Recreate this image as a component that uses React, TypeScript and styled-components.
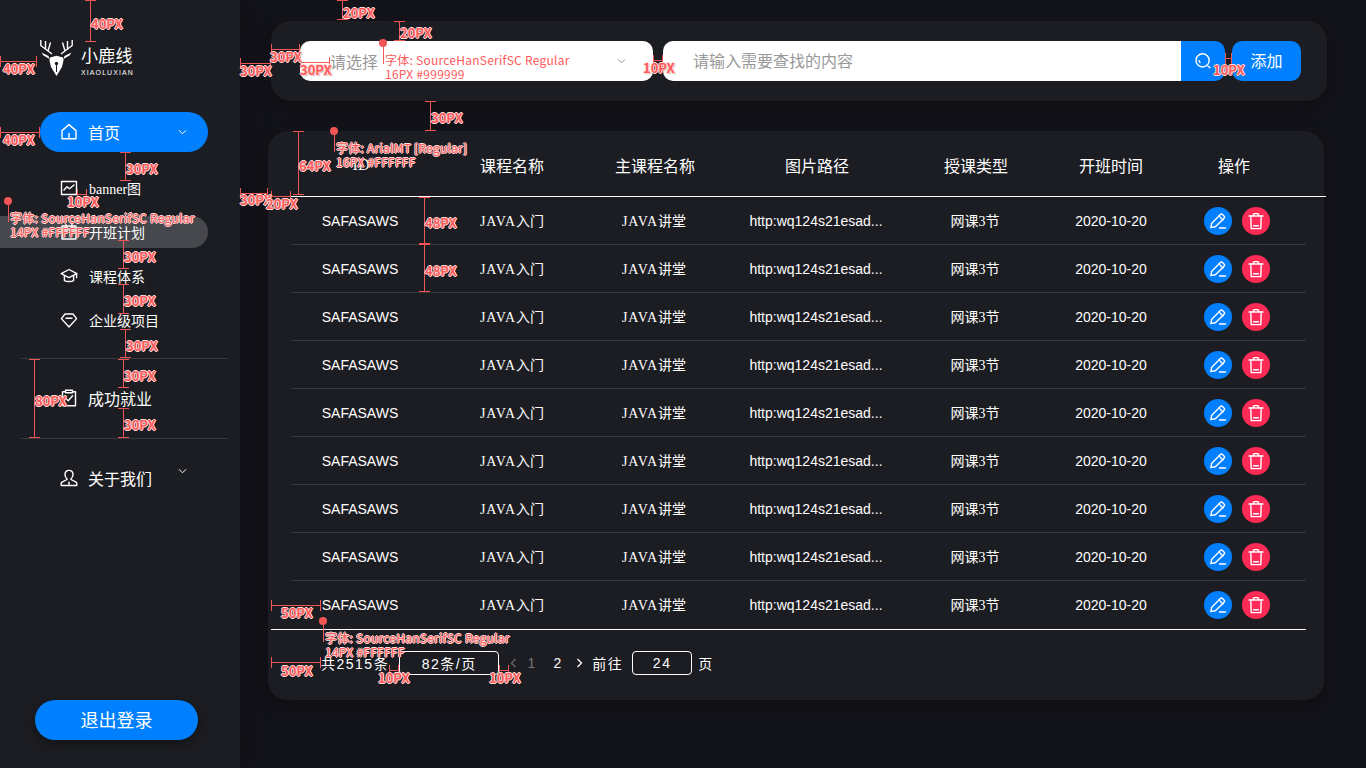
import styled, { createGlobalStyle } from "styled-components";
import { ReactNode } from "react";

const SERIF = `"Liberation Serif", "Noto Sans CJK SC", serif`;
const ARIAL = `"Liberation Sans", "Noto Sans CJK SC", sans-serif`;
const BLUE = "#007fff";

const rows = Array.from({ length: 9 }, (_, i) => i);

export default function App() {
  return (
    <Page>
      <GlobalStyle />
      <Sidebar>
        <Logo>
          <DeerLogo />
          <LogoText>
            <LogoName>小鹿线</LogoName>
            <LogoSub>XIAOLUXIAN</LogoSub>
          </LogoText>
        </Logo>
        <HomeItem>
          <IconHome />
          <ItemLabel $size={16}>首页</ItemLabel>
          <Chevron $color="#fff" />
        </HomeItem>
        <SubNav>
          <SubItem>
            <IconChart />
            <ItemLabel>banner图</ItemLabel>
          </SubItem>
          <SubItem $active>
            <IconCalendar />
            <ItemLabel>开班计划</ItemLabel>
          </SubItem>
          <SubItem>
            <IconCap />
            <ItemLabel>课程体系</ItemLabel>
          </SubItem>
          <SubItem>
            <IconDiamond />
            <ItemLabel>企业级项目</ItemLabel>
          </SubItem>
        </SubNav>
        <Section>
          <IconClipboard />
          <ItemLabel $size={16}>成功就业</ItemLabel>
        </Section>
        <AboutItem>
          <IconUser />
          <ItemLabel $size={16}>关于我们</ItemLabel>
          <AboutChevron>
            <Chevron $color="#fff" />
          </AboutChevron>
        </AboutItem>
        <Logout>退出登录</Logout>
      </Sidebar>

      <Main>
        <SearchPanel>
          <SelectBox>
            <span>请选择</span>
            <Chevron $color="#999" />
          </SelectBox>
          <SearchInput>请输入需要查找的内容</SearchInput>
          <SearchButton>
            <IconSearch />
          </SearchButton>
          <AddButton>添加</AddButton>
        </SearchPanel>

        <TableCard>
          <HeadRow>
            <HeadCell>ID</HeadCell>
            <HeadCell $shift={2}>课程名称</HeadCell>
            <HeadCell>主课程名称</HeadCell>
            <HeadCell>图片路径</HeadCell>
            <HeadCell>授课类型</HeadCell>
            <HeadCell>开班时间</HeadCell>
            <HeadCell $shift={8}>操作</HeadCell>
          </HeadRow>
          <Rows>
            {rows.map((i) => (
              <Row key={i}>
                <SansCell>SAFASAWS</SansCell>
                <SerifCell>
                  <Latin>JAVA</Latin>入门
                </SerifCell>
                <SerifCell>
                  <Latin>JAVA</Latin>讲堂
                </SerifCell>
                <SansCell>http:wq124s21esad...</SansCell>
                <SerifCell>网课3节</SerifCell>
                <DateCell>2020-10-20</DateCell>
                <Actions>
                  <RoundButton $color={BLUE}>
                    <IconPencil />
                  </RoundButton>
                  <RoundButton $color="#ff2a55">
                    <IconTrash />
                  </RoundButton>
                </Actions>
              </Row>
            ))}
          </Rows>
          <Pager>
            <span>共2515条</span>
            <PageSize>82条/页</PageSize>
            <PagerArrow $width={14}>
              <ArrowGlyph $color="#666" $flip />
            </PagerArrow>
            <PageNum $dim>1</PageNum>
            <PageNum $gap={8}>2</PageNum>
            <PagerArrow $width={17} $gap={8}>
              <ArrowGlyph $color="#fff" />
            </PagerArrow>
            <span>前往</span>
            <PageInput>24</PageInput>
            <span>页</span>
          </Pager>
        </TableCard>
      </Main>

      <Annotations />
    </Page>
  );
}

/* ---------- redline markup that sits over the design ---------- */

type Span = [number, number, number];

const hSpans: Span[] = [
  [0, 37, 61], [0, 40, 132], [77, 87, 194], [240, 271, 63], [240, 268, 193],
  [271, 291, 196], [271, 300, 49], [300, 330, 62], [653, 663, 60], [1225, 1232, 58],
  [271, 321, 605], [271, 321, 662], [389, 399, 670], [499, 509, 670],
];

const vSpans: Span[] = [
  [90, 0, 42], [125, 152, 181], [123, 240, 269], [123, 284, 314], [125, 329, 358],
  [123, 359, 388], [123, 408, 438], [34, 359, 438], [298, 131, 195], [342, 0, 20],
  [399, 21, 41], [430, 101, 131], [424, 197, 244], [424, 244, 292],
];

const labels: [string, number, number][] = [
  ["40PX", 91, 24], ["40PX", 3, 69], ["40PX", 3, 140], ["30PX", 126, 169],
  ["10PX", 67, 202], ["30PX", 124, 257], ["30PX", 124, 301], ["30PX", 126, 346],
  ["30PX", 124, 376], ["30PX", 124, 425], ["80PX", 35, 401], ["30PX", 240, 71],
  ["30PX", 240, 200], ["20PX", 266, 204], ["64PX", 299, 166], ["20PX", 343, 13],
  ["20PX", 400, 33], ["30PX", 270, 57], ["30PX", 300, 70], ["10PX", 643, 68],
  ["30PX", 431, 118], ["48PX", 425, 223], ["48PX", 425, 271], ["10PX", 1213, 70],
  ["50PX", 281, 613], ["50PX", 281, 671], ["10PX", 378, 678], ["10PX", 489, 678],
];

const notes: [string, string, number, number, boolean][] = [
  ["字体: SourceHanSerifSC Regular", "14PX #FFFFFF", 8, 201, true],
  ["字体: SourceHanSerifSC Regular", "16PX #999999", 383, 43, false],
  ["字体: ArialMT [Regular]", "16PX #FFFFFF", 334, 131, true],
  ["字体: SourceHanSerifSC Regular", "14PX #FFFFFF", 323, 621, true],
];

function Annotations() {
  return (
    <Layer>
      {hSpans.map(([a, b, y], i) => (
        <HSpan key={i} $x={a} $y={y} $w={b - a} />
      ))}
      {vSpans.map(([x, a, b], i) => (
        <VSpan key={i} $x={x} $y={a} $h={b - a} />
      ))}
      {labels.map(([t, x, y], i) => (
        <Label key={i} $x={x} $y={y}>
          {t}
        </Label>
      ))}
      {notes.map(([a, b, x, y, glow], i) => (
        <Note key={i} $x={x} $y={y}>
          <Dot />
          <NoteText $glow={glow}>
            {a}
            <br />
            {b}
          </NoteText>
        </Note>
      ))}
    </Layer>
  );
}

/* ---------- icons ---------- */

function Svg({ size = 18, children }: { size?: number; children: ReactNode }) {
  return (
    <svg
      width={size}
      height={size}
      viewBox="0 0 18 18"
      fill="none"
      stroke="#fff"
      strokeWidth="1.4"
      strokeLinejoin="round"
      strokeLinecap="round"
      style={{ flexShrink: 0 }}
    >
      {children}
    </svg>
  );
}

function IconHome() {
  return (
    <Svg>
      <path d="M2 7.6 9 1.6l7 6v8.2H2z" />
      <path d="M9 10.5v5" />
    </Svg>
  );
}
function IconChart() {
  return (
    <Svg>
      <rect x="1.5" y="2.5" width="15" height="13" />
      <path d="m4 11 3-3.2 2.5 2L14 6" />
    </Svg>
  );
}
function IconCalendar() {
  return (
    <Svg>
      <rect x="2" y="3" width="14" height="13" />
      <path d="M2 7h14M6 1.5V4M12 1.5V4" />
    </Svg>
  );
}
function IconCap() {
  return (
    <Svg>
      <path d="M9 2.5 1.2 6.6 9 10.6l7.8-4z" />
      <path d="M4.4 8.6v4.8c1.4 1.5 7.8 1.5 9.2 0V8.6" />
      <path d="M16.6 6.8v4" />
    </Svg>
  );
}
function IconDiamond() {
  return (
    <Svg>
      <path d="M5 3h8l3.6 4.6L9 16 1.4 7.6z" />
      <path d="M6 7.2h6" />
    </Svg>
  );
}
function IconClipboard() {
  return (
    <Svg>
      <path d="M5 2.8H2.5v14h13v-14H13" />
      <rect x="5.5" y="1.2" width="7" height="2.6" />
      <path d="m5.6 9.2 2.6 2.6 4.4-5" />
    </Svg>
  );
}
function IconUser() {
  return (
    <Svg>
      <path d="M9 1.4c2.5 0 4 1.8 4 4.2 0 1.9-.9 3.3-2 4.1v.8l5 2.6c.5.3.8.8.8 1.3v2.1H1.2v-2.1c0-.5.3-1 .8-1.3l5-2.6v-.8c-1.1-.8-2-2.2-2-4.1 0-2.4 1.5-4.2 4-4.2z" />
      <path d="M9 13.2v3" />
    </Svg>
  );
}
function IconSearch() {
  return (
    <Svg>
      <circle cx="8.6" cy="8.4" r="6.6" />
      <path d="m14 14 2 1.8M5 8.5a3.5 3.5 0 0 0 1 2" />
    </Svg>
  );
}
function IconPencil() {
  return (
    <Svg>
      <path d="M1.8 15.6 2.8 11.2 11.4 2.6c.6-.6 1.5-.6 2.1 0l1.6 1.6c.6.6.6 1.5 0 2.1L6.4 14.8z" />
      <path d="M10 4 14 8M10.5 16h6" />
    </Svg>
  );
}
function IconTrash() {
  return (
    <Svg>
      <path d="M2 4h14M6.2 4 6.8 1.6h4.400L11.8 4" />
      <path d="M3.8 4l.4 12.600h9.600L14.200 4" />
      <path d="M6.5 13.800h5" />
    </Svg>
  );
}
function Chevron({ $color }: { $color: string }) {
  return (
    <svg width="9" height="6" viewBox="0 0 10 6" fill="none" stroke={$color} strokeWidth="1.1">
      <path d="m1 1 4 4 4-4" />
    </svg>
  );
}
function ArrowGlyph({ $color, $flip }: { $color: string; $flip?: boolean }) {
  return (
    <svg width="7" height="10" viewBox="0 0 7 10" fill="none" stroke={$color} strokeWidth="1.3">
      <path d={$flip ? "M5.5 1 1.5 5l4 4" : "m1.5 1 4 4-4 4"} />
    </svg>
  );
}
function DeerLogo() {
  return (
    <svg width="33" height="36" viewBox="0 0 33 36" fill="none" style={{ flexShrink: 0 }}>
      <g stroke="#fff" strokeWidth="1.4">
        <path d="M.8 0v5.5L12 14M5.5 1v8M10.5 2.5 8 11" />
        <path d="M32.2 0v5.5L21 14M27.5 1v8M22.5 2.5 25 11" />
      </g>
      <path d="M1.5 12.5 8.5 16l1 3-6-3.500zM31.5 12.500 24.500 16l-1 3 6-3.500z" fill="#fff" />
      <path d="M10 17.500 16.500 15.800 23 17.500l.6 2.500-1.600 7-5.500 9-5.500-9-1.600-7z" fill="#fff" />
      <path d="M16.500 24v8" stroke="#1c1d22" strokeWidth="1" />
      <circle cx="16.500" cy="23.500" r="1.700" fill="#1c1d22" />
    </svg>
  );
}

/* ---------- styles ---------- */

const GlobalStyle = createGlobalStyle`
  html, body { margin: 0; padding: 0; background: #13131a; }
  * { box-sizing: border-box; }
`;

const Page = styled.div`
  position: relative;
  display: flex;
  width: 1366px;
  height: 768px;
  overflow: hidden;
  background: #13131a;
  color: #fff;
  font-family: ${SERIF};
  font-size: 14px;
`;

const Sidebar = styled.aside`
  display: flex;
  flex-direction: column;
  flex: 0 0 240px;
  height: 768px;
  padding-top: 40px;
  background: #1c1d22;
  box-shadow: 6px 0 24px rgba(0, 0, 0, 0.25);
`;

const Logo = styled.div`
  display: flex;
  align-items: center;
  gap: 8px;
  height: 36px;
  margin: 0 0 36px 40px;
`;

const LogoText = styled.div`
  display: flex;
  flex-direction: column;
  padding-top: 6px;
  font-family: ${ARIAL};
`;

const LogoName = styled.div`
  font-size: 17px;
  line-height: 22px;
  letter-spacing: 0.3px;
`;

const LogoSub = styled.div`
  font-size: 7px;
  line-height: 9px;
  letter-spacing: 1.1px;
`;

const HomeItem = styled.div`
  display: flex;
  align-items: center;
  gap: 10px;
  width: 168px;
  height: 40px;
  margin-left: 40px;
  padding: 0 21px 0 20px;
  border-radius: 20px;
  background: ${BLUE};

  svg:last-child {
    margin-left: auto;
  }
`;

const ItemLabel = styled.span<{ $size?: number }>`
  font-size: ${(p) => p.$size ?? 14}px;
  white-space: nowrap;
`;

const SubNav = styled.div`
  display: flex;
  flex-direction: column;
  gap: 12px;
  margin-top: 20px;
`;

const SubItem = styled.div<{ $active?: boolean }>`
  display: flex;
  align-items: center;
  gap: 11px;
  width: 208px;
  height: 32px;
  padding-left: 60px;
  border-radius: 0 16px 16px 0;
  background: ${(p) => (p.$active ? "#47484d" : "transparent")};
`;

const Section = styled.div`
  display: flex;
  align-items: center;
  gap: 10px;
  width: 207px;
  height: 81px;
  margin: 22px 0 0 21px;
  padding: 0 0 2px 39px;
  border-top: 1px solid #37383d;
  border-bottom: 1px solid #37383d;
`;

const AboutItem = styled.div`
  position: relative;
  display: flex;
  align-items: center;
  gap: 10px;
  height: 32px;
  margin-top: 23px;
  padding-left: 60px;
`;

const AboutChevron = styled.span`
  position: absolute;
  left: 178px;
  top: 6px;
  line-height: 0;
`;

const Logout = styled.button`
  width: 163px;
  height: 40px;
  margin: auto 0 28px 35px;
  padding: 0 0 2px;
  border: 0;
  border-radius: 20px;
  background: ${BLUE};
  color: #fff;
  font-family: ${SERIF};
  font-size: 18px;
  box-shadow: 0 4px 12px rgba(0, 0, 0, 0.35);
`;

const Main = styled.main`
  flex: 1;
  padding: 21px 0 0 28px;
`;

const SearchPanel = styled.div`
  display: flex;
  align-items: center;
  width: 1056px;
  height: 80px;
  margin-left: 3px;
  padding: 0 26px 0 29px;
  border-radius: 20px;
  background: #1c1d22;
  box-shadow: 0 6px 20px rgba(0, 0, 0, 0.3);
  font-size: 16px;
`;

const SelectBox = styled.div`
  display: flex;
  align-items: center;
  justify-content: space-between;
  width: 353px;
  height: 40px;
  padding: 0 27px 1px 30px;
  border-radius: 10px;
  background: #fff;
  color: #999;
`;

const SearchInput = styled.div`
  display: flex;
  align-items: center;
  width: 518px;
  height: 40px;
  margin-left: 10px;
  padding: 0 0 2px 30px;
  border-radius: 10px 0 0 10px;
  background: #fff;
  color: #999;
`;

const SearchButton = styled.div`
  display: flex;
  align-items: center;
  justify-content: center;
  width: 44px;
  height: 40px;
  border-radius: 0 10px 10px 0;
  background: ${BLUE};
`;

const AddButton = styled.button`
  width: 69px;
  height: 40px;
  margin-left: 7px;
  padding: 0 0 2px;
  border: 0;
  border-radius: 10px;
  background: ${BLUE};
  color: #fff;
  font-family: ${SERIF};
  font-size: 16px;
`;

const TableCard = styled.section`
  width: 1056px;
  height: 569px;
  margin-top: 30px;
  border-radius: 20px;
  background: #1c1d22;
  box-shadow: 0 6px 20px rgba(0, 0, 0, 0.3);
`;

const columns = "138px 166px 118px 206px 112px 158px 96px";

const HeadRow = styled.div`
  display: grid;
  grid-template-columns: ${columns};
  align-items: center;
  width: 1055px;
  height: 66px;
  margin-left: 3px;
  padding: 2px 0 0 21px;
  border-bottom: 1px solid #fff;
`;

const HeadCell = styled.div<{ $shift?: number }>`
  padding-right: ${(p) => p.$shift ?? 0}px;
  font-size: 16px;
  text-align: center;
`;

const Rows = styled.div`
  width: 1035px;
  margin-left: 3px;
  padding-left: 20px;
  border-bottom: 1px solid #fff;
`;

const Row = styled.div`
  display: grid;
  grid-template-columns: ${columns};
  align-items: center;
  height: 48px;
  border-bottom: 1px solid #37383d;

  &:last-child {
    border-bottom: 0;
  }
`;

const SansCell = styled.div`
  font-family: ${ARIAL};
  font-size: 14px;
  text-align: center;
`;

const DateCell = styled(SansCell)`
  padding-left: 2px;
`;

const SerifCell = styled.div`
  padding-bottom: 2px;
  font-size: 14px;
  text-align: center;
`;

const Latin = styled.span`
  letter-spacing: 1px;
`;

const Actions = styled.div`
  display: flex;
  justify-content: center;
  gap: 10px;
`;

const RoundButton = styled.div<{ $color: string }>`
  display: flex;
  align-items: center;
  justify-content: center;
  width: 28px;
  height: 28px;
  border-radius: 50%;
  background: ${(p) => p.$color};
`;

const Pager = styled.div`
  display: flex;
  align-items: center;
  height: 24px;
  margin: 21px 0 0 53px;
  font-family: ${ARIAL};
  letter-spacing: 1.5px;
  white-space: nowrap;
`;

const PageSize = styled.div`
  display: flex;
  align-items: center;
  justify-content: center;
  width: 100px;
  height: 24px;
  margin: 0 10px;
  border: 1px solid #fff;
  border-radius: 4px;
`;

const PagerArrow = styled.span<{ $width: number; $gap?: number }>`
  display: flex;
  align-items: center;
  width: ${(p) => p.$width}px;
  margin-left: ${(p) => p.$gap ?? 0}px;
  padding-left: 1px;
`;

const PageNum = styled.span<{ $dim?: boolean; $gap?: number }>`
  width: 18px;
  margin-left: ${(p) => p.$gap ?? 0}px;
  text-align: center;
  color: ${(p) => (p.$dim ? "#777" : "#fff")};
`;

const PageInput = styled.div`
  display: flex;
  align-items: center;
  justify-content: center;
  width: 60px;
  height: 24px;
  margin: 0 6px 0 9px;
  border: 1px solid #fff;
  border-radius: 4px;
`;

const Layer = styled.div`
  position: absolute;
  inset: 0;
  pointer-events: none;
  font-family: "Noto Sans CJK SC", sans-serif;
`;

const HSpan = styled.i.attrs<{ $x: number; $y: number; $w: number }>((p) => ({
  style: { left: p.$x, top: p.$y, width: p.$w },
}))<{ $x: number; $y: number; $w: number }>`
  position: absolute;
  height: 1px;
  background: #f25555;

  &::before,
  &::after {
    content: "";
    position: absolute;
    top: -5px;
    width: 1px;
    height: 11px;
    background: #f25555;
  }
  &::before { left: 0; }
  &::after { right: 0; }
`;

const VSpan = styled.i.attrs<{ $x: number; $y: number; $h: number }>((p) => ({
  style: { left: p.$x, top: p.$y, height: p.$h },
}))<{ $x: number; $y: number; $h: number }>`
  position: absolute;
  width: 1px;
  background: #f25555;

  &::before,
  &::after {
    content: "";
    position: absolute;
    left: -5px;
    width: 11px;
    height: 1px;
    background: #f25555;
  }
  &::before { top: 0; }
  &::after { bottom: 0; }
`;

const halo = `-1px 0 #ffdcdc, 1px 0 #ffdcdc, 0 -1px #ffdcdc, 0 1px #ffdcdc, 1px 1px 1px rgba(0,0,0,.45)`;

const Label = styled.span.attrs<{ $x: number; $y: number }>((p) => ({
  style: { left: p.$x, top: p.$y - 8 },
}))<{ $x: number; $y: number }>`
  position: absolute;
  font-size: 13px;
  line-height: 16px;
  font-weight: 700;
  color: #ff5a5a;
  text-shadow: ${halo};
`;

const Note = styled.div.attrs<{ $x: number; $y: number }>((p) => ({
  style: { left: p.$x, top: p.$y },
}))<{ $x: number; $y: number }>`
  position: absolute;
  width: 1px;
  height: 21px;
  background: #f25555;
`;

const Dot = styled.i`
  position: absolute;
  left: -4px;
  top: -4px;
  width: 8px;
  height: 8px;
  border-radius: 50%;
  background: #f25555;
`;

const NoteText = styled.div<{ $glow: boolean }>`
  position: absolute;
  left: 2px;
  top: 10px;
  font-size: 12px;
  line-height: 14px;
  letter-spacing: 0.25px;
  color: #ff5a5a;
  white-space: nowrap;
  text-shadow: ${(p) => (p.$glow ? halo : "none")};
`;
